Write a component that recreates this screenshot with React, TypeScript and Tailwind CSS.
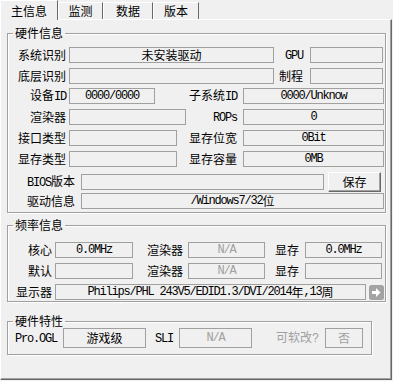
import clsx from "clsx";
import type { ReactNode } from "react";

const CJK = /[\u4e00-\u9fff]/;

// split a string into CJK runs and Latin runs (the Latin ones look like a narrow bitmap font)
const Mixed = ({ text }: { text: string }) => {
  const parts = text.match(/[\u4e00-\u9fff]+|[^\u4e00-\u9fff]+/g) ?? [];
  return (
    <>
      {parts.map((part, index) =>
        CJK.test(part) ? (
          <span key={index} className="font-['Noto_Sans_CJK_SC',sans-serif] text-[12px]">
            {part}
          </span>
        ) : (
          <span
            key={index}
            className="font-['Liberation_Mono','Noto_Sans_CJK_SC',monospace] text-[12px] tracking-[-1.2px]"
          >
            {part}
          </span>
        ),
      )}
    </>
  );
};

const Label = ({
  text,
  className,
  dim,
}: {
  text: string;
  className: string;
  dim?: boolean;
}) => (
  <div
    className={clsx(
      "shrink-0 whitespace-nowrap leading-[16px]",
      dim ? "text-[#a0a0a0]" : "text-black",
      className,
    )}
  >
    <Mixed text={text} />
  </div>
);

const Field = ({
  value,
  className,
  dim,
}: {
  value?: string;
  className: string;
  dim?: boolean;
}) => (
  <div
    className={clsx(
      "flex shrink-0 items-center justify-center overflow-hidden whitespace-nowrap border border-[#a0a0a0] leading-[14px]",
      dim ? "text-[#a0a0a0]" : "text-black",
      className,
    )}
  >
    {value && <Mixed text={value} />}
  </div>
);

const Group = ({
  title,
  className,
  children,
}: {
  title: string;
  className: string;
  children: ReactNode;
}) => (
  <fieldset
    className={clsx(
      "border border-[#a0a0a0] shadow-[inset_1px_1px_0_#fff,1px_1px_0_#fff]",
      className,
    )}
  >
    <legend className="ml-[5px] px-[2px] text-[12px] leading-[14px] text-black">
      {title}
    </legend>
    {children}
  </fieldset>
);

const Tab = ({
  label,
  active,
  className,
}: {
  label: string;
  active?: boolean;
  className: string;
}) => (
  <div
    className={clsx(
      "flex shrink-0 items-center justify-center border-l border-t border-r border-l-white border-t-white border-r-[#696969] bg-[#f0f0f0] text-[12px] leading-[16px]",
      active ? "relative z-10 h-[20px]" : "mt-[2px] h-[17px]",
      className,
    )}
  >
    {label}
  </div>
);

const ArrowButton = () => (
  <svg width="15" height="15" viewBox="0 0 15 15" className="shrink-0">
    <rect x="0" y="0" width="15" height="15" rx="2.5" fill="#a3a3a3" />
    <rect x="3" y="6" width="5" height="3" fill="#fff" />
    <polygon points="7,3 11.5,7.5 7,12" fill="#fff" />
  </svg>
);

export default function App() {
  return (
    <div className="h-[381px] w-[393px] overflow-hidden bg-[#f0f0f0] font-['Noto_Sans_CJK_SC',sans-serif] text-[12px] text-black">
      <div className="flex h-[19px] items-start">
        <Tab label="主信息" active className="w-[58px]" />
        <Tab label="监测" className="w-[45px]" />
        <Tab label="数据" className="w-[50px]" />
        <Tab label="版本" className="w-[46px]" />
      </div>

      <div className="h-[361px] w-[392px] border-b border-l border-r border-t border-b-[#696969] border-l-white border-r-[#696969] border-t-white pl-[6px] shadow-[inset_-1px_-1px_0_#a0a0a0]">
        <Group title="硬件信息" className="mt-[6px] w-[379px] pb-[3px] pt-[7px]">
          <div className="flex h-[16px] items-center">
            <Label text="系统识别" className="w-[58px] text-right" />
            <Field value="未安装驱动" className="ml-[3px] h-[16px] w-[205px]" />
            <Label text="GPU" className="w-[29px] text-right" />
            <Field className="ml-[7px] h-[16px] w-[73px]" />
          </div>
          <div className="mt-[5px] flex h-[16px] items-center">
            <Label text="底层识别" className="w-[58px] text-right" />
            <Field className="ml-[3px] h-[16px] w-[205px]" />
            <Label text="制程" className="w-[29px] text-right" />
            <Field className="ml-[7px] h-[16px] w-[73px]" />
          </div>
          <div className="mt-[4px] flex h-[16px] items-center">
            <Label text="设备ID" className="w-[58px] text-right" />
            <Field value="0000/0000" className="ml-[3px] h-[16px] w-[86px]" />
            <Label text="子系统ID" className="w-[82px] text-right" />
            <Field value="0000/Unknow" className="ml-[6px] h-[16px] w-[141px]" />
          </div>
          <div className="mt-[5px] flex h-[16px] items-center">
            <Label text="渲染器" className="w-[58px] text-right" />
            <Field className="ml-[3px] h-[16px] w-[117px]" />
            <Label text="ROPs" className="w-[51px] text-right" />
            <Field value="0" className="ml-[6px] h-[16px] w-[141px]" />
          </div>
          <div className="mt-[5px] flex h-[16px] items-center">
            <Label text="接口类型" className="w-[58px] text-right" />
            <Field className="ml-[3px] h-[16px] w-[108px]" />
            <Label text="显存位宽" className="w-[60px] text-right" />
            <Field value="0Bit" className="ml-[6px] h-[16px] w-[141px]" />
          </div>
          <div className="mt-[5px] flex h-[16px] items-center">
            <Label text="显存类型" className="w-[58px] text-right" />
            <Field className="ml-[3px] h-[16px] w-[108px]" />
            <Label text="显存容量" className="w-[60px] text-right" />
            <Field value="0MB" className="ml-[6px] h-[16px] w-[141px]" />
          </div>
          <div className="mt-[5px] flex h-[20px] items-center">
            <Label text="BIOS版本" className="w-[67px] text-right" />
            <Field className="ml-[6px] h-[16px] w-[243px]" />
            <button className="ml-[4px] flex h-[20px] w-[53px] items-center justify-center border border-b-[#696969] border-l-white border-r-[#696969] border-t-white bg-[#f0f0f0] text-[12px] leading-[16px] shadow-[inset_-1px_-1px_0_#a0a0a0]">
              保存
            </button>
          </div>
          <div className="mt-[1px] flex h-[16px] items-center">
            <Label text="驱动信息" className="w-[67px] text-right" />
            <Field value="/Windows7/32位" className="ml-[6px] h-[16px] w-[303px]" />
          </div>
        </Group>

        <Group title="频率信息" className="mt-[5px] w-[379px] pb-[1px] pt-[10px]">
          <div className="flex h-[16px] items-center">
            <Label text="核心" className="w-[44px] text-right" />
            <Field value="0.0MHz" className="ml-[3px] h-[16px] w-[78px]" />
            <Label text="渲染器" className="w-[50px] text-right" />
            <Field value="N/A" dim className="ml-[5px] h-[16px] w-[77px]" />
            <Label text="显存" className="w-[34px] text-right" />
            <Field value="0.0MHz" className="ml-[6px] h-[16px] w-[77px]" />
          </div>
          <div className="mt-[5px] flex h-[16px] items-center">
            <Label text="默认" className="w-[44px] text-right" />
            <Field className="ml-[3px] h-[16px] w-[78px]" />
            <Label text="渲染器" className="w-[50px] text-right" />
            <Field value="N/A" dim className="ml-[5px] h-[16px] w-[77px]" />
            <Label text="显存" className="w-[34px] text-right" />
            <Field className="ml-[6px] h-[16px] w-[77px]" />
          </div>
          <div className="mt-[5px] flex h-[16px] items-center">
            <Label text="显示器" className="w-[44px] text-right" />
            <Field
              value="Philips/PHL 243V5/EDID1.3/DVI/2014年,13周"
              className="ml-[3px] h-[16px] w-[311px]"
            />
            <div className="ml-[3px]">
              <ArrowButton />
            </div>
          </div>
        </Group>

        <Group title="硬件特性" className="mt-[12px] w-[365px] pb-[6px]">
          <div className="flex h-[20px] items-center">
            <Label text="Pro.OGL" className="w-[55px] pl-[7px]" />
            <Field value="游戏级" className="h-[20px] w-[83px]" />
            <Label text="SLI" className="w-[33px] pl-[9px]" />
            <Field value="N/A" dim className="h-[20px] w-[73px]" />
            <Label text="可软改?" dim className="w-[73px] pr-[7px] text-right" />
            <Field value="否" dim className="h-[20px] w-[38px]" />
          </div>
        </Group>
      </div>
    </div>
  );
}
